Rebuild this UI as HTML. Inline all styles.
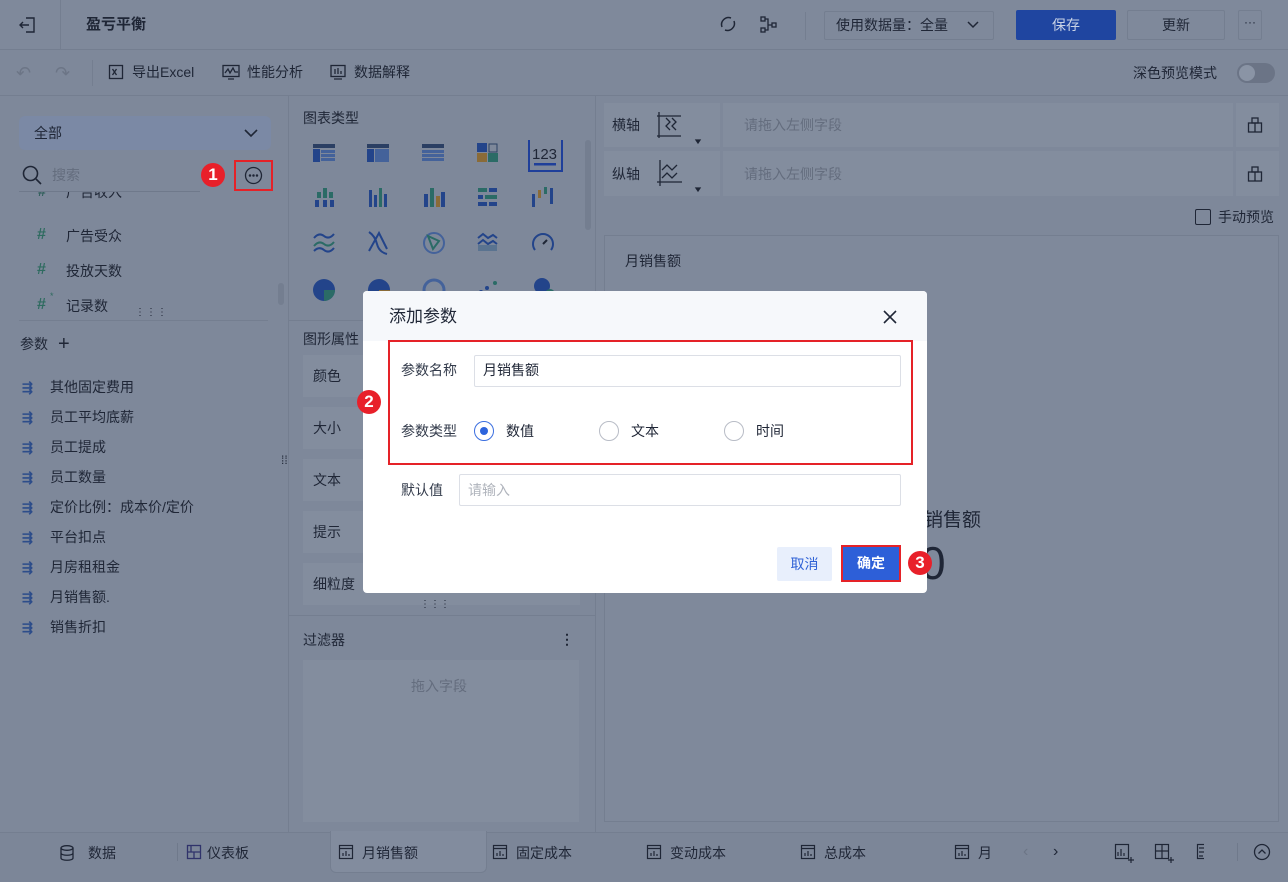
<!DOCTYPE html>
<html><head><meta charset="utf-8">
<style>
*{box-sizing:border-box;margin:0;padding:0}
body{width:1288px;height:882px;overflow:hidden;background:#7e889a;font-family:"Liberation Sans","Noto Sans CJK SC",sans-serif;font-size:14px;color:#1f2636;position:relative}
.a{position:absolute}
.t{position:absolute;white-space:nowrap;line-height:1}
.badge{position:absolute;width:24px;height:24px;border-radius:50%;background:#e8202a;color:#fff;font-size:17px;text-align:center;line-height:24px;font-weight:bold}
.ico{position:absolute;width:20px;height:20px}
.fld{position:absolute;left:22px;font-size:14px;color:#1f2636;white-space:nowrap}
.fld b{display:inline-block;width:28px;color:#2d4d8a;font-weight:bold;font-size:13px}
.ci{position:absolute;width:26px;height:22px}
</style></head><body>
<!-- top bar -->
<div class="a" style="left:0;top:0;width:1288px;height:50px;background:#7f899b;border-bottom:1px solid #747e90"></div>
<div class="a" style="left:60px;top:0;width:1px;height:50px;background:#747e90"></div>
<svg class="a" style="left:18px;top:15px" width="20" height="20" viewBox="0 0 20 20" fill="none" stroke="#1f2636" stroke-width="1.4"><path d="M8 3h8v14H8M2 10h9M5 7l-3 3 3 3"/></svg>
<div class="t" style="left:86px;top:17px;font-size:15px;font-weight:bold">盈亏平衡</div>
<svg class="a" style="left:718px;top:14px" width="20" height="20" viewBox="0 0 20 20" fill="none" stroke="#1f2636" stroke-width="1.5"><path d="M4 13a7 7 0 0 1 9-9M16 7a7 7 0 0 1-9 9"/></svg>
<svg class="a" style="left:759px;top:15px" width="20" height="20" viewBox="0 0 20 20" fill="none" stroke="#1f2636" stroke-width="1.3"><rect x="2" y="2" width="4" height="4"/><rect x="2" y="13" width="4" height="4"/><rect x="13" y="8" width="4" height="4"/><path d="M6 4h3v11H6M9 10h4"/></svg>
<div class="a" style="left:805px;top:12px;width:1px;height:28px;background:#747e90"></div>
<div class="a" style="left:824px;top:11px;width:170px;height:29px;border:1px solid #747e90;border-radius:2px"></div>
<div class="t" style="left:836px;top:18px;font-size:14px">使用数据量：全量</div>
<svg class="a" style="left:966px;top:18px" width="14" height="14" viewBox="0 0 14 14" fill="none" stroke="#1f2636" stroke-width="1.5"><path d="M2 4l5 5 5-5"/></svg>
<div class="a" style="left:1016px;top:10px;width:100px;height:30px;background:#1f45a0;border-radius:2px;color:#c9d3e6;text-align:center;line-height:30px;font-size:14px">保存</div>
<div class="a" style="left:1127px;top:10px;width:98px;height:30px;border:1px solid #747e90;border-radius:2px;text-align:center;line-height:28px">更新</div>
<div class="a" style="left:1238px;top:10px;width:24px;height:30px;border:1px solid #747e90;border-radius:2px;text-align:center;line-height:22px;font-size:12px">···</div>
<!-- toolbar -->
<div class="a" style="left:0;top:95px;width:1288px;height:1px;background:#747e90"></div>
<div class="t" style="left:16px;top:64px;color:#6c7586;font-size:18px">↶</div>
<div class="t" style="left:55px;top:64px;color:#6c7586;font-size:18px">↷</div>
<div class="a" style="left:92px;top:60px;width:1px;height:26px;background:#747e90"></div>
<svg class="a" style="left:108px;top:64px" width="16" height="16" viewBox="0 0 16 16" fill="none" stroke="#1f2636" stroke-width="1.3"><rect x="1.5" y="1.5" width="13" height="13"/><path d="M4.5 5l4 6M8.5 5l-4 6"/></svg>
<div class="t" style="left:132px;top:65px">导出Excel</div>
<svg class="a" style="left:222px;top:64px" width="18" height="16" viewBox="0 0 18 16" fill="none" stroke="#1f2636" stroke-width="1.3"><rect x="1" y="1.5" width="16" height="11"/><path d="M3 9l3-4 2 4 3-5 2 4h3M6 15h6"/></svg>
<div class="t" style="left:247px;top:65px">性能分析</div>
<svg class="a" style="left:330px;top:64px" width="16" height="16" viewBox="0 0 16 16" fill="none" stroke="#1f2636" stroke-width="1.3"><rect x="1" y="1.5" width="14" height="11"/><path d="M5 5v5M8 4v6M11 7v3M4 15h8"/></svg>
<div class="t" style="left:354px;top:65px">数据解释</div>
<div class="t" style="left:1133px;top:66px">深色预览模式</div>
<div class="a" style="left:1237px;top:63px;width:38px;height:20px;border-radius:10px;background:#6b7486"></div>
<div class="a" style="left:1239px;top:65px;width:16px;height:16px;border-radius:50%;background:#8a94a5"></div>
<!-- left panel -->
<div class="a" style="left:288px;top:96px;width:1px;height:736px;background:#747e90"></div>
<div class="a" style="left:19px;top:116px;width:252px;height:34px;background:#7b89a5;border-radius:6px"></div>
<div class="t" style="left:34px;top:126px">全部</div>
<svg class="a" style="left:243px;top:126px" width="16" height="14" viewBox="0 0 16 14" fill="none" stroke="#1f2636" stroke-width="1.6"><path d="M2 4l6 6 6-6"/></svg>
<svg class="a" style="left:21px;top:164px" width="22" height="22" viewBox="0 0 22 22" fill="none" stroke="#1f2636" stroke-width="1.6"><circle cx="9.5" cy="9.5" r="7"/><path d="M15 15l5 5"/></svg>
<div class="t" style="left:52px;top:168px;color:#646d7e">搜索</div>
<div class="a" style="left:19px;top:191px;width:181px;height:1px;background:#6f798b"></div>
<div class="badge" style="left:201px;top:163px">1</div>
<div class="a" style="left:234px;top:160px;width:39px;height:31px;border:2px solid #e52228"></div>
<svg class="a" style="left:244px;top:166px" width="19" height="19" viewBox="0 0 19 19" fill="none" stroke="#1f2636" stroke-width="1.3"><circle cx="9.5" cy="9.5" r="8"/><circle cx="6" cy="9.5" r=".6"/><circle cx="9.5" cy="9.5" r=".6"/><circle cx="13" cy="9.5" r=".6"/></svg>
<div class="a" style="left:0;top:192px;width:288px;height:10px;overflow:hidden"><div class="t" style="left:38px;top:-8px;color:#2f5e5a;font-weight:bold">#</div><div class="t" style="left:66px;top:-7px">广告收入</div></div>
<div class="t" style="left:37px;top:227px;color:#2f6b60;font-weight:bold;font-size:16px">#</div><div class="t" style="left:66px;top:229px">广告受众</div>
<div class="t" style="left:37px;top:262px;color:#2f6b60;font-weight:bold;font-size:16px">#</div><div class="t" style="left:66px;top:264px">投放天数</div>
<div class="t" style="left:37px;top:297px;color:#2f6b60;font-weight:bold;font-size:16px">#</div><div class="t" style="left:50px;top:292px;color:#2f6b60;font-size:9px">*</div><div class="t" style="left:66px;top:299px">记录数</div>
<div class="a" style="left:278px;top:283px;width:6px;height:22px;border-radius:3px;background:#747e90"></div>
<div class="t" style="left:135px;top:308px;font-size:10px;letter-spacing:1px">⋮⋮⋮</div>
<div class="a" style="left:19px;top:320px;width:249px;height:1px;background:#747e90"></div>
<div class="t" style="left:20px;top:337px">参数</div>
<div class="t" style="left:58px;top:334px;font-size:20px;font-weight:300">+</div>
<div class="fld" style="top:377px"><b>⇶</b>其他固定费用</div>
<div class="fld" style="top:407px"><b>⇶</b>员工平均底薪</div>
<div class="fld" style="top:437px"><b>⇶</b>员工提成</div>
<div class="fld" style="top:467px"><b>⇶</b>员工数量</div>
<div class="fld" style="top:497px"><b>⇶</b>定价比例：成本价/定价</div>
<div class="fld" style="top:527px"><b>⇶</b>平台扣点</div>
<div class="fld" style="top:557px"><b>⇶</b>月房租租金</div>
<div class="fld" style="top:587px"><b>⇶</b>月销售额.</div>
<div class="fld" style="top:617px"><b>⇶</b>销售折扣</div>
<div class="t" style="left:281px;top:454px;font-size:12px">⁞⁞</div>
<!-- middle panel -->
<div class="a" style="left:595px;top:96px;width:1px;height:736px;background:#747e90"></div>
<div class="t" style="left:303px;top:111px">图表类型</div>
<div class="a" style="left:585px;top:140px;width:6px;height:90px;border-radius:3px;background:#747e90"></div>
<!-- chart icons -->
<svg class="a" style="left:313px;top:140px" width="262" height="165" viewBox="0 0 262 165">
<g fill="#23448a"><rect x="0" y="4" width="22" height="4" fill="#2b3f63"/><rect x="0" y="9" width="7" height="13"/><rect x="8" y="10" width="14" height="3" fill="#44629a"/><rect x="8" y="14" width="14" height="3" fill="#44629a"/><rect x="8" y="18" width="14" height="3" fill="#44629a"/>
<rect x="54" y="4" width="22" height="4" fill="#2b3f63"/><rect x="54" y="9" width="7" height="13"/><rect x="62" y="9" width="14" height="13" fill="#44629a"/>
<rect x="109" y="4" width="22" height="4" fill="#2b3f63"/><rect x="109" y="10" width="22" height="3" fill="#44629a"/><rect x="109" y="14" width="22" height="3" fill="#44629a"/><rect x="109" y="18" width="22" height="3" fill="#44629a"/>
<rect x="164" y="3" width="10" height="9"/><rect x="176" y="4" width="8" height="8" fill="none" stroke="#2b3f63"/><rect x="164" y="13" width="10" height="9" fill="#8a6b38"/><rect x="175" y="13" width="10" height="9" fill="#2b6b66"/></g>
<rect x="216" y="-3" width="33" height="34" fill="none" stroke="#1f3f9a" stroke-width="2"/><text x="219" y="19" font-size="15" fill="#1f2636" font-family="Liberation Sans">123</text><rect x="221" y="23" width="22" height="2.5" fill="#1f3f9a"/>
<g fill="#23448a">
<rect x="4" y="52" width="4" height="6" fill="#2b6b66"/><rect x="10" y="48" width="4" height="10" fill="#2b6b66"/><rect x="16" y="52" width="4" height="6" fill="#2b6b66"/><rect x="2" y="60" width="4" height="7"/><rect x="10" y="60" width="4" height="7"/><rect x="17" y="60" width="4" height="7"/>
<rect x="56" y="50" width="3" height="17"/><rect x="61" y="55" width="3" height="12"/><rect x="66" y="48" width="3" height="19" fill="#2b6b66"/><rect x="71" y="54" width="3" height="13"/>
<rect x="111" y="54" width="4" height="13"/><rect x="117" y="48" width="4" height="19" fill="#2b6b66"/><rect x="123" y="56" width="4" height="11" fill="#8a6b38"/><rect x="128" y="52" width="4" height="15"/>
<rect x="165" y="48" width="9" height="4" fill="#2b6b66"/><rect x="176" y="48" width="8" height="4"/><rect x="165" y="55" width="5" height="4"/><rect x="172" y="55" width="12" height="4" fill="#2b6b66"/><rect x="165" y="62" width="9" height="4"/><rect x="176" y="62" width="8" height="4"/>
<rect x="219" y="54" width="3" height="13"/><rect x="225" y="50" width="3" height="8" fill="#8a6b38"/><rect x="231" y="47" width="3" height="7" fill="#2b6b66"/><rect x="237" y="48" width="3" height="16"/></g>
<g fill="none" stroke-width="2"><path d="M1 98q5-6 10-2t10-2" stroke="#23448a"/><path d="M1 106q5-6 10-2t10-2" stroke="#2b6b66"/><path d="M1 111q5-5 10-1t10-2" stroke="#23448a"/>
<path d="M56 92q6 4 8 12t10 10M56 111l10-18 8 16" stroke="#23448a"/>
<circle cx="121" cy="103" r="10" stroke="#44629a"/><path d="M115 96l11 5-6 8z" stroke="#2b6b66"/>
<path d="M165 98l5-4 5 4 5-3 4 3M165 104l5-4 5 4 5-3 4 3" stroke="#23448a"/><rect x="165" y="105" width="19" height="6" fill="#5a7390" stroke="none"/>
<path d="M222 110a10 10 0 1 1 16 0" stroke="#23448a"/><path d="M230 104l4-4" stroke="#1f2636"/>
</g>
<g><circle cx="11" cy="150" r="11" fill="#23448a"/><path d="M11 150h11a11 11 0 0 1-11 11z" fill="#2b6b66"/>
<circle cx="66" cy="150" r="11" fill="#23448a"/><path d="M66 150h11a11 11 0 0 1-11 11z" fill="#8a6b38"/>
<circle cx="121" cy="150" r="10" fill="none" stroke="#44629a" stroke-width="3"/>
<circle cx="168" cy="152" r="2" fill="#23448a"/><circle cx="174" cy="148" r="2" fill="#23448a"/><circle cx="182" cy="143" r="2" fill="#2b6b66"/>
<circle cx="229" cy="146" r="8" fill="#23448a"/><circle cx="237" cy="154" r="5" fill="#2b6b66"/></g>
</svg>
<div class="a" style="left:289px;top:320px;width:306px;height:1px;background:#747e90"></div>
<div class="t" style="left:303px;top:332px">图形属性</div>
<div class="a" style="left:303px;top:355px;width:277px;height:42px;background:#838d9e"></div>
<div class="a" style="left:303px;top:407px;width:277px;height:42px;background:#838d9e"></div>
<div class="a" style="left:303px;top:459px;width:277px;height:42px;background:#838d9e"></div>
<div class="a" style="left:303px;top:511px;width:277px;height:42px;background:#838d9e"></div>
<div class="a" style="left:303px;top:563px;width:277px;height:42px;background:#838d9e"></div>
<div class="t" style="left:313px;top:369px">颜色</div><div class="t" style="left:313px;top:421px">大小</div><div class="t" style="left:313px;top:473px">文本</div><div class="t" style="left:313px;top:525px">提示</div><div class="t" style="left:313px;top:577px">细粒度</div>
<div class="t" style="left:420px;top:600px;font-size:10px">⋮⋮⋮</div>
<div class="a" style="left:289px;top:615px;width:306px;height:1px;background:#747e90"></div>
<div class="t" style="left:303px;top:633px">过滤器</div>
<div class="t" style="left:560px;top:632px;font-weight:bold">⋮</div>
<div class="a" style="left:303px;top:660px;width:276px;height:162px;background:#838d9e"></div>
<div class="t" style="left:411px;top:679px;color:#646d7e">拖入字段</div>
<!-- right panel -->
<div class="a" style="left:604px;top:103px;width:675px;height:44px;background:#838d9e"></div>
<div class="a" style="left:604px;top:151px;width:675px;height:45px;background:#838d9e"></div>
<div class="a" style="left:720px;top:103px;width:3px;height:93px;background:#7e889a"></div>
<div class="a" style="left:1233px;top:103px;width:3px;height:93px;background:#7e889a"></div>
<div class="t" style="left:612px;top:118px">横轴</div><div class="t" style="left:612px;top:167px">纵轴</div>
<svg class="a" style="left:656px;top:110px" width="50" height="36" viewBox="0 0 50 36" fill="none" stroke="#1f2636" stroke-width="1.3"><path d="M3 2v26M1 6h24M1 26h24M10 8l4 4-4 4 4 4M16 8l4 4-4 4 4 4"/><path d="M40 30l2 3 2-3z" fill="#1f2636"/></svg>
<svg class="a" style="left:656px;top:158px" width="50" height="36" viewBox="0 0 50 36" fill="none" stroke="#1f2636" stroke-width="1.3"><path d="M4 2v26M1 24h25M6 12l5-5 5 5 5-5M6 20l5-5 5 5 5-5"/><path d="M40 30l2 3 2-3z" fill="#1f2636"/></svg>
<div class="t" style="left:744px;top:118px;color:#646d7e">请拖入左侧字段</div>
<div class="t" style="left:744px;top:167px;color:#646d7e">请拖入左侧字段</div>
<svg class="a" style="left:1247px;top:116px" width="16" height="18" viewBox="0 0 16 18" fill="none" stroke="#1f2636" stroke-width="1.3"><rect x="1.5" y="7" width="13" height="9"/><rect x="5" y="2" width="6" height="5"/><path d="M8 7v9"/></svg>
<svg class="a" style="left:1247px;top:165px" width="16" height="18" viewBox="0 0 16 18" fill="none" stroke="#1f2636" stroke-width="1.3"><rect x="1.5" y="7" width="13" height="9"/><rect x="5" y="2" width="6" height="5"/><path d="M8 7v9"/></svg>
<div class="a" style="left:1195px;top:209px;width:16px;height:16px;border:1.3px solid #1f2636;border-radius:2px"></div>
<div class="t" style="left:1218px;top:210px">手动预览</div>
<div class="a" style="left:604px;top:235px;width:675px;height:587px;border:1px solid #747e90;background:#7f899b"></div>
<div class="t" style="left:625px;top:254px">月销售额</div>
<div class="t" style="left:905px;top:511px;font-size:19px">月销售额</div>
<div class="t" style="left:920px;top:540px;font-size:46px;font-weight:300">0</div>
<!-- bottom bar -->
<div class="a" style="left:0;top:832px;width:1288px;height:50px;background:#7c8698;border-top:1px solid #747e90"></div>
<div class="a" style="left:330px;top:831px;width:157px;height:42px;background:#828c9e;border-radius:0 0 6px 6px;border:1px solid #747e90;border-top:none"></div>
<svg class="a" style="left:60px;top:845px" width="14" height="16" viewBox="0 0 14 16" fill="none" stroke="#1f2636" stroke-width="1.3"><ellipse cx="7" cy="3" rx="6" ry="2.3"/><path d="M1 3v10c0 3 12 3 12 0V3M1 8c0 3 12 3 12 0"/></svg>
<div class="t" style="left:88px;top:846px">数据</div>
<div class="a" style="left:177px;top:843px;width:1px;height:18px;background:#6f798b"></div>
<div class="t" style="left:207px;top:846px">仪表板</div>
<div class="t" style="left:362px;top:846px">月销售额</div>
<div class="t" style="left:516px;top:846px">固定成本</div>
<div class="t" style="left:670px;top:846px">变动成本</div>
<div class="t" style="left:824px;top:846px">总成本</div>
<div class="t" style="left:978px;top:846px">月</div>
<svg class="a" style="left:186px;top:844px" width="16" height="16" viewBox="0 0 16 16" fill="none" stroke="#30336b" stroke-width="1.3"><rect x="1.5" y="1.5" width="13" height="13"/><path d="M1.5 8h13M8 8v6.5M5 1.5v6.5"/></svg>
<svg class="a" style="left:338px;top:844px" width="16" height="16" viewBox="0 0 16 16" fill="none" stroke="#1f2636" stroke-width="1.2"><rect x="1.5" y="1.5" width="13" height="13"/><path d="M1.5 4.5h13M5 12V9M8 12V7M11 12V10"/></svg>
<svg class="a" style="left:492px;top:844px" width="16" height="16" viewBox="0 0 16 16" fill="none" stroke="#1f2636" stroke-width="1.2"><rect x="1.5" y="1.5" width="13" height="13"/><path d="M1.5 4.5h13M5 12V9M8 12V7M11 12V10"/></svg>
<svg class="a" style="left:646px;top:844px" width="16" height="16" viewBox="0 0 16 16" fill="none" stroke="#1f2636" stroke-width="1.2"><rect x="1.5" y="1.5" width="13" height="13"/><path d="M1.5 4.5h13M5 12V9M8 12V7M11 12V10"/></svg>
<svg class="a" style="left:800px;top:844px" width="16" height="16" viewBox="0 0 16 16" fill="none" stroke="#1f2636" stroke-width="1.2"><rect x="1.5" y="1.5" width="13" height="13"/><path d="M1.5 4.5h13M5 12V9M8 12V7M11 12V10"/></svg>
<svg class="a" style="left:954px;top:844px" width="16" height="16" viewBox="0 0 16 16" fill="none" stroke="#1f2636" stroke-width="1.2"><rect x="1.5" y="1.5" width="13" height="13"/><path d="M1.5 4.5h13M5 12V9M8 12V7M11 12V10"/></svg>
<div class="t" style="left:1023px;top:844px;color:#6c7586;font-size:16px">‹</div>
<div class="t" style="left:1053px;top:844px;font-size:16px">›</div>
<svg class="a" style="left:1114px;top:843px" width="90" height="20" viewBox="0 0 90 20" fill="none" stroke="#1f2636" stroke-width="1.2"><rect x="1.5" y="1.5" width="13" height="14"/><path d="M4 13V9M7 13V6M10 13V10M14 17h6M17 14v6"/><rect x="41.5" y="1.5" width="13" height="14"/><path d="M41.5 8h13M48 1.5v14M54 17h6M57 14v6"/><rect x="83.5" y="1.5" width="12" height="14"/><path d="M85 5h8M85 9h8M85 13h4"/></svg>
<div class="a" style="left:1237px;top:843px;width:1px;height:18px;background:#6f798b"></div>
<svg class="a" style="left:1253px;top:843px" width="18" height="18" viewBox="0 0 18 18" fill="none" stroke="#1f2636" stroke-width="1.3"><circle cx="9" cy="9" r="7.5"/><path d="M5.5 10.5L9 7l3.5 3.5"/></svg>
<!-- dialog -->
<div class="a" style="left:363px;top:291px;width:564px;height:302px;background:#fff;border-radius:4px;overflow:hidden">
 <div class="a" style="left:0;top:0;width:564px;height:50px;background:#f6f8fb"></div>
</div>
<div class="t" style="left:389px;top:308px;font-size:17px;color:#1f2636">添加参数</div>
<svg class="a" style="left:882px;top:309px" width="16" height="16" viewBox="0 0 16 16" fill="none" stroke="#1f2636" stroke-width="1.6"><path d="M2 2l12 12M14 2L2 14"/></svg>
<div class="a" style="left:388px;top:340px;width:525px;height:125px;border:2px solid #e52228"></div>
<div class="badge" style="left:357px;top:390px">2</div>
<div class="t" style="left:401px;top:363px;color:#333b4b">参数名称</div>
<div class="a" style="left:474px;top:355px;width:427px;height:32px;border:1px solid #dcdfe6;border-radius:2px"></div>
<div class="t" style="left:483px;top:363px;color:#1f2636">月销售额</div>
<div class="t" style="left:401px;top:424px;color:#333b4b">参数类型</div>
<div class="a" style="left:474px;top:421px;width:20px;height:20px;border:1.5px solid #3b6fe0;border-radius:50%"></div>
<div class="a" style="left:480px;top:427px;width:8px;height:8px;background:#2d64dc;border-radius:50%"></div>
<div class="t" style="left:506px;top:424px">数值</div>
<div class="a" style="left:599px;top:421px;width:20px;height:20px;border:1px solid #b8bcc6;border-radius:50%"></div>
<div class="t" style="left:631px;top:424px">文本</div>
<div class="a" style="left:724px;top:421px;width:20px;height:20px;border:1px solid #b8bcc6;border-radius:50%"></div>
<div class="t" style="left:756px;top:424px">时间</div>
<div class="t" style="left:401px;top:483px;color:#333b4b">默认值</div>
<div class="a" style="left:459px;top:474px;width:442px;height:32px;border:1px solid #dcdfe6;border-radius:2px"></div>
<div class="t" style="left:468px;top:483px;color:#b0b4bc">请输入</div>
<div class="a" style="left:777px;top:547px;width:55px;height:34px;background:#e8effc;color:#2f62d6;text-align:center;line-height:34px;border-radius:2px">取消</div>
<div class="a" style="left:841px;top:545px;width:60px;height:37px;border:2px solid #e52228"></div>
<div class="a" style="left:843px;top:547px;width:56px;height:33px;background:#2d5fd8;color:#fff;text-align:center;line-height:33px;font-weight:bold">确定</div>
<div class="badge" style="left:908px;top:551px">3</div>
</body></html>
